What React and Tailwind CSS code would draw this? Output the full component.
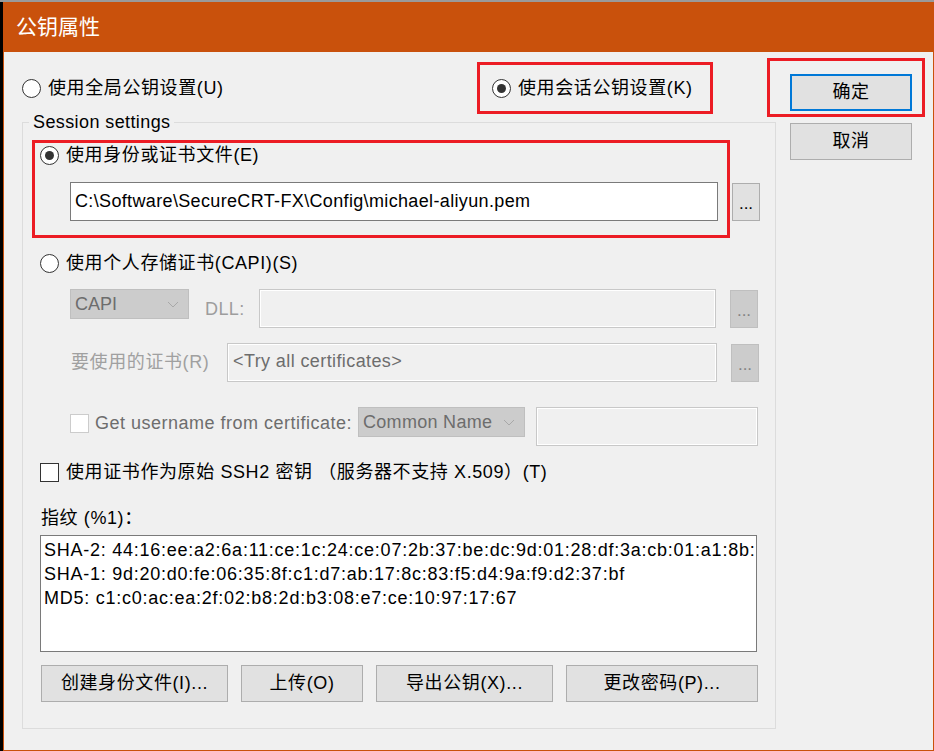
import React from 'react';

const FONT = { fontFamily: '"Segoe UI", "Liberation Sans", "Noto Sans CJK SC", sans-serif' };

const Radio = ({ checked }) => (
  <div className="w-[19px] h-[19px] rounded-full border border-[#333333] bg-white flex items-center justify-center shrink-0">
    {checked && <div className="w-[9px] h-[9px] rounded-full bg-[#333333]" />}
  </div>
);

const Check = ({ disabled }) => (
  <div
    className={`w-[19px] h-[19px] bg-white border shrink-0 ${
      disabled ? 'border-[#cccccc]' : 'border-[#333333]'
    }`}
  />
);

const Dots = ({ disabled }) => (
  <div
    className={`w-[28px] h-[38px] shrink-0 flex items-end justify-center pb-[8px] text-[17px] leading-none border ${
      disabled
        ? 'bg-[#cccccc] border-[#bfbfbf] text-[#838383]'
        : 'bg-[#e1e1e1] border-[#adadad] text-black'
    }`}
  >
    ...
  </div>
);

const Chevron = () => (
  <svg width="12" height="7" viewBox="0 0 12 7" className="shrink-0">
    <path d="M1 1 L6 6 L11 1" fill="none" stroke="#a8a8a8" strokeWidth="1" />
  </svg>
);

const Button = ({ children, className = '' }) => (
  <div
    className={`h-[37px] bg-[#e1e1e1] border border-[#adadad] flex items-center justify-center text-[18px] tracking-[0.6px] text-black ${className}`}
  >
    {children}
  </div>
);

export default function App() {
  return (
    <div className="w-[934px] h-[751px] bg-black overflow-hidden text-black" style={FONT}>
      <div className="h-[2px] bg-[#9a9a9a]" />
      <div className="ml-[3px] w-[931px] h-[749px] bg-[#f0f0f0] border-x border-b border-[#c9510c] flex flex-col">
        {/* Title bar */}
        <div className="h-[50px] bg-[#c9510c] text-white text-[21px] pl-[12px] flex items-center shrink-0">
          公钥属性
        </div>

        <div className="flex">
          {/* Left side */}
          <div className="w-[772px] shrink-0">
            <div className="mt-[10px] h-[52px] flex items-center">
              <div className="ml-[18px] flex items-center gap-[7px] text-[18px] tracking-[0.6px]">
                <Radio />
                <span>使用全局公钥设置(U)</span>
              </div>
              <div className="ml-auto mr-[63px] w-[236px] h-[52px] border-[3px] border-[#ec1c24] flex items-center pl-[12px] gap-[7px] text-[18px] tracking-[0.6px]">
                <Radio checked />
                <span>使用会话公钥设置(K)</span>
              </div>
            </div>

            {/* Session settings group */}
            <div className="relative mt-[8px] ml-[18px] w-[754px] h-[607px] border border-[#dcdcdc]">
              <div className="absolute left-[6px] top-[-13px] px-[4px] bg-[#f0f0f0] text-[18px] tracking-[0.4px] leading-[24px]">
                Session settings
              </div>

              <div className="mt-[17px] ml-[9px] w-[698px] h-[98px] border-[3px] border-[#ec1c24]">
                <div className="pt-[5px] pl-[5px] flex items-center gap-[7px] text-[18px] tracking-[0.6px] h-[24px] mt-[-2px]">
                  <Radio checked />
                  <span>使用身份或证书文件(E)</span>
                </div>
                <div className="mt-[17px] ml-[35px] flex items-start">
                  <div className="w-[648px] h-[39px] shrink-0 bg-white border border-[#7a7a7a] pl-[4px] flex items-center text-[18px] tracking-[0.35px] whitespace-nowrap">
                    C:\Software\SecureCRT-FX\Config\michael-aliyun.pem
                  </div>
                  <div className="ml-[14px] mt-[1px]">
                    <Dots />
                  </div>
                </div>
              </div>

              <div className="mt-[16px] ml-[17px] flex items-center gap-[7px] text-[18px] tracking-[0.6px] h-[19px]">
                <Radio />
                <span>使用个人存储证书(CAPI)(S)</span>
              </div>

              <div className="mt-[16px] ml-[47px] flex items-start">
                <div className="w-[119px] h-[30px] bg-[#cccccc] border border-[#bfbfbf] flex items-center justify-between pl-[4px] pr-[9px] text-[18px] text-[#6d6d6d]">
                  <span>CAPI</span>
                  <Chevron />
                </div>
                <div className="ml-[16px] mt-[7px] text-[18px] tracking-[0.4px] text-[#9d9d9d]">DLL:</div>
                <div className="ml-auto w-[457px] h-[39px] bg-[#f0f0f0] border border-[#c8c8c8] shadow-[inset_0_0_0_1px_#ffffff]" />
                <div className="ml-[14px] mr-[17px] mt-[1px]">
                  <Dots disabled />
                </div>
              </div>

              <div className="mt-[15px] ml-[48px] flex items-start">
                <div className="w-[156px] mt-[7px] text-[18px] tracking-[0.6px] text-[#a0a0a0] leading-[24px]">
                  要使用的证书(R)
                </div>
                <div className="w-[490px] h-[39px] bg-[#f0f0f0] border border-[#c8c8c8] shadow-[inset_0_0_0_1px_#ffffff] pl-[5px] pt-[4px] text-[18px] tracking-[0.4px] text-[#6d6d6d]">
                  &lt;Try all certificates&gt;
                </div>
                <div className="ml-[14px] mt-[1px]">
                  <Dots disabled />
                </div>
              </div>

              <div className="mt-[25px] ml-[47px] flex items-start">
                <div className="mt-[6px] flex items-center gap-[6px]">
                  <Check disabled />
                  <span className="text-[18px] tracking-[0.5px] text-[#6d6d6d] leading-[20px] whitespace-nowrap">
                    Get username from certificate:
                  </span>
                </div>
                <div className="ml-auto w-[167px] h-[30px] bg-[#cccccc] border border-[#bfbfbf] flex items-center justify-between pl-[4px] pr-[9px] text-[18px] tracking-[0.3px] text-[#6d6d6d]">
                  <span>Common Name</span>
                  <Chevron />
                </div>
                <div className="ml-[11px] mr-[17px] w-[222px] h-[39px] shrink-0 bg-[#f0f0f0] border border-[#c8c8c8] shadow-[inset_0_0_0_1px_#ffffff]" />
              </div>

              <div className="mt-[17px] ml-[17px] flex items-center gap-[7px] text-[18px] tracking-[0.6px] h-[19px]">
                <Check />
                <span>使用证书作为原始 SSH2 密钥 （服务器不支持 X.509）(T)</span>
              </div>

              <div className="mt-[24px] ml-[18px] text-[18px] tracking-[0.6px] leading-[24px]">指纹 (%1)：</div>

              <div className="mt-[5px] ml-[17px] w-[717px] h-[117px] bg-white border border-[#7a7a7a] pl-[3px] pt-[2px] text-[18px] tracking-[0.75px] leading-[24px] overflow-hidden whitespace-nowrap">
                <div>SHA-2: 44:16:ee:a2:6a:11:ce:1c:24:ce:07:2b:37:be:dc:9d:01:28:df:3a:cb:01:a1:8b:</div>
                <div>SHA-1: 9d:20:d0:fe:06:35:8f:c1:d7:ab:17:8c:83:f5:d4:9a:f9:d2:37:bf</div>
                <div>MD5: c1:c0:ac:ea:2f:02:b8:2d:b3:08:e7:ce:10:97:17:67</div>
              </div>

              <div className="mt-[13px] ml-[18px] flex gap-[13px]">
                <Button className="w-[187px]">创建身份文件(I)...</Button>
                <Button className="w-[122px]">上传(O)</Button>
                <Button className="w-[177px]">导出公钥(X)...</Button>
                <Button className="w-[192px]">更改密码(P)...</Button>
              </div>
            </div>
          </div>

          {/* Right side */}
          <div className="flex-1">
            <div className="mt-[6px] ml-[-9px] w-[158px] h-[59px] border-[3px] border-[#ec1c24] pt-[13px] pl-[20px]">
              <div className="w-[122px] h-[37px] bg-[#e1e1e1] border-2 border-[#0078d7] flex items-center justify-center text-[18px] tracking-[0.6px]">
                确定
              </div>
            </div>
            <Button className="mt-[6px] ml-[14px] w-[122px]">取消</Button>
          </div>
        </div>
      </div>
    </div>
  );
}
